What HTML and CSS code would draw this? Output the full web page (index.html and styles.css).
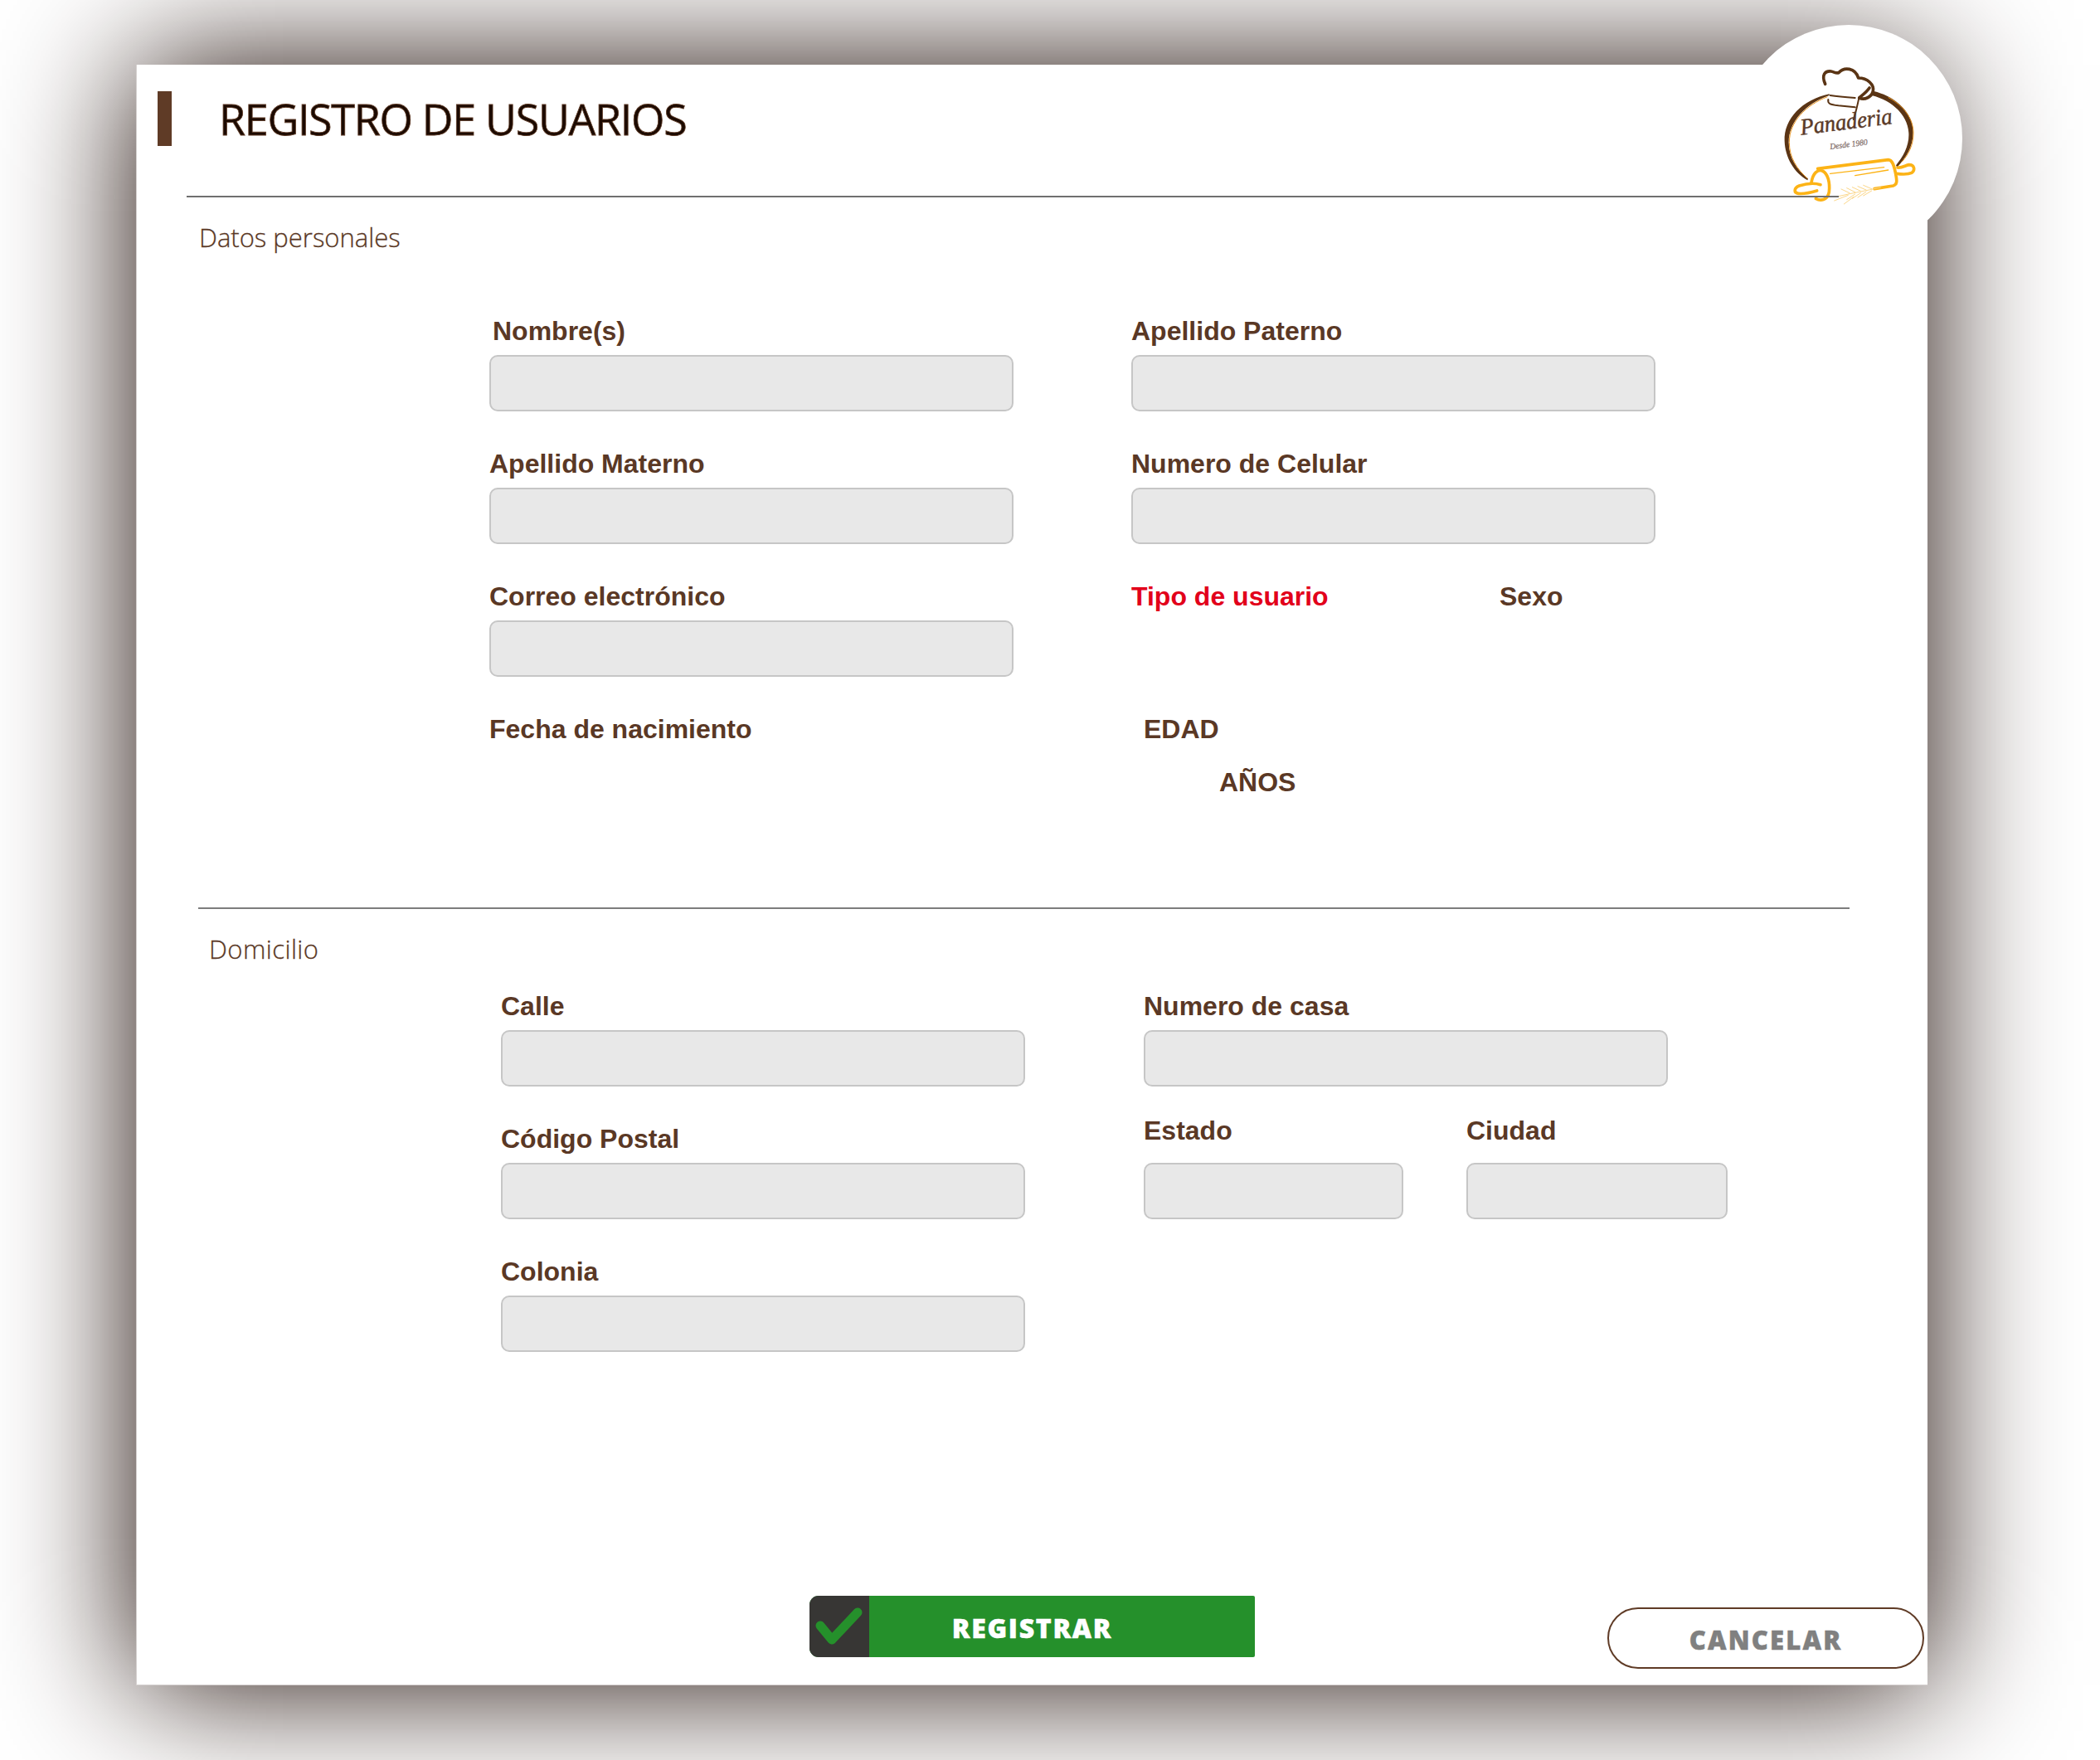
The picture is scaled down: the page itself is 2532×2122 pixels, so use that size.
FILE: index.html
```html
<!DOCTYPE html>
<html lang="es">
<head>
<meta charset="utf-8">
<title>Registro de usuarios</title>
<link rel="stylesheet" href="styles.css">
</head>
<body>
<main class="card">
  <div class="logo-badge">
    <svg class="logo" viewBox="96 90 822 822" aria-label="Panadería">
      <path class="ring" d="M437 340C340 360 272 430 275 510C277 570 310 625 358 652L360 646C320 615 290 570 290 515C290 440 350 375 437 345Z"/>
      <path class="ring-o" d="M430 350C352 380 292 440 292 515C292 570 320 612 358 646"/>
      <path class="ring" d="M598 330C680 350 742 410 740 480C740 530 715 570 682 605L678 598C705 565 727 525 724 480C720 420 670 365 590 345Z"/>
      <path class="ring-o" d="M650 352C705 382 741 428 741 482C741 525 722 560 700 585"/>
      <path class="hat" d="M422 304C408 272 420 256 443 258C455 260 462 268 472 262C490 242 530 244 542 282C575 282 600 306 595 330C590 350 565 364 545 354C555 345 570 335 582 318"/>
      <path class="hat-thin" d="M545 350C540 375 535 400 524 432M440 345C470 350 500 352 530 354M433 360C430 375 440 378 470 382C490 384 510 386 530 388"/>
      <text class="brand" x="335" y="488" textLength="335" lengthAdjust="spacingAndGlyphs" transform="rotate(-7 335 488)">Panaderia</text>
      <text class="since" x="440" y="540" textLength="137" lengthAdjust="spacingAndGlyphs" transform="rotate(-7 440 540)">Desde 1980</text>
      <path class="pin" d="M395 610L650 578C665 578 672 600 678 635C682 655 682 668 668 672L600 683"/>
      <path class="pin" d="M372 660C378 625 395 612 412 618C432 628 440 660 436 695C430 725 405 728 388 718"/>
      <path class="pin" d="M405 668C380 660 350 665 328 672C308 680 308 698 325 700C345 702 375 695 392 690"/>
      <path class="pin" d="M684 606C700 608 712 598 725 596C745 596 748 615 735 625C720 632 695 630 680 628"/>
      <path class="pin-thin" d="M440 628L635 605M530 635L650 615"/>
      <path class="wheat" d="M622 678C570 690 520 698 470 710M480 684L510 698M500 680L530 695M520 677L550 691M540 674L570 687M560 670L590 683M500 722L530 702M520 718L550 698M540 714L570 694M560 708L590 690M455 726L505 706M490 738L525 712"/>
    </svg>
  </div>
  <header class="head">
    <span class="head-bar"></span>
    <h1 class="title">REGISTRO DE USUARIOS</h1>
  </header>
  <div class="rule rule-top"></div>
  <h2 class="section section-personal">Datos personales</h2>
  <form class="form form-personal">
    <div class="field"><label class="label label-nudge">Nombre(s)</label><input class="input" type="text"></div>
    <div class="field"><label class="label">Apellido Paterno</label><input class="input" type="text"></div>
    <div class="field"><label class="label">Apellido Materno</label><input class="input" type="text"></div>
    <div class="field"><label class="label">Numero de Celular</label><input class="input" type="text"></div>
    <div class="field"><label class="label">Correo electrónico</label><input class="input" type="text"></div>
    <div class="pair">
      <label class="label label-red">Tipo de usuario</label>
      <label class="label">Sexo</label>
    </div>
    <div class="field"><label class="label">Fecha de nacimiento</label></div>
    <div class="age">
      <label class="label">EDAD</label>
      <span class="label age-unit">AÑOS</span>
    </div>
  </form>
  <div class="rule rule-mid"></div>
  <h2 class="section section-home">Domicilio</h2>
  <form class="form form-home">
    <div class="field"><label class="label">Calle</label><input class="input" type="text"></div>
    <div class="field"><label class="label">Numero de casa</label><input class="input" type="text"></div>
    <div class="field"><label class="label">Código Postal</label><input class="input" type="text"></div>
    <div class="split">
      <div class="field"><label class="label label-raised">Estado</label><input class="input" type="text"></div>
      <div class="field"><label class="label label-raised">Ciudad</label><input class="input" type="text"></div>
    </div>
    <div class="field"><label class="label">Colonia</label><input class="input" type="text"></div>
  </form>
  <footer class="actions">
    <button class="btn-save" type="button">
      <span class="btn-save-icon">
        <svg class="check" viewBox="0 0 72 74"><path d="M13 36L27 53L58 20"/></svg>
      </span>
      <span class="btn-save-text">REGISTRAR</span>
    </button>
    <button class="btn-cancel" type="button">CANCELAR</button>
  </footer>
</main>
</body>
</html>
```
FILE: styles.css
```css
* { box-sizing: border-box; }
html, body { margin: 0; background: #fff; }
body { padding: 78px 0 0 164px; height: 2122px; overflow: hidden; }

.card {
  position: relative;
  width: 2160px;
  height: 1954px;
  padding-top: 32px;
  background: #fff;
  border: 1px solid #d6d2d1;
  border-width: 0 0 1px 1px;
  box-shadow: 0 0 155px #1d0b05;
}

.logo-badge {
  position: absolute;
  left: 1927px;
  top: -48px;
  width: 274px;
  height: 274px;
  border-radius: 50%;
  background: #fff;
}
.logo { display: block; width: 274px; height: 274px; }
.ring { fill: #5a3414; }
.ring-o { fill: none; stroke: #e8931e; stroke-width: 3; }
.hat { fill: none; stroke: #5a3414; stroke-width: 11; stroke-linecap: round; stroke-linejoin: round; }
.hat-thin { fill: none; stroke: #5a3414; stroke-width: 6; stroke-linecap: round; }
.brand { font: italic 400 84px "Liberation Serif", serif; fill: #5a3a28; stroke: #5a3a28; stroke-width: 1.5; }
.since { font: italic 30px "Liberation Serif", serif; fill: #7d6a66; stroke: #7d6a66; stroke-width: 0.6; }
.pin { fill: #fff; stroke: #fcb316; stroke-width: 11; stroke-linecap: round; stroke-linejoin: round; }
.pin-thin { fill: none; stroke: #fcb316; stroke-width: 4; stroke-linecap: round; }
.wheat { fill: none; stroke: #fbd78a; stroke-width: 3; stroke-linecap: round; }

.head { position: relative; display: flex; align-items: center; gap: 57px; margin-left: 25px; height: 66px; }
.head-bar { width: 17px; height: 66px; background: #5f3b26; }
.title {
  margin: 0;
  font: 400 52px/66px "Open Sans", sans-serif;
  letter-spacing: -1.3px;
  color: #1c0a00;
  -webkit-text-stroke: 0.8px #5f3b26;
}

.rule { position: relative; height: 2px; background: #6f6f6f; }
.rule-top { width: 1992px; margin: 60px 0 0 60px; }
.rule-mid { width: 1991px; margin: 132px 0 0 74px; background: #7d7d7d; }

.section { margin: 26px 0 0; font: 300 31px/44px "Open Sans", sans-serif; color: #5a3825; -webkit-text-stroke: 0.3px #5a3825; }
.section-personal { margin-left: 75px; }
.section-home { margin-left: 87px; letter-spacing: 0.45px; }

.form { display: grid; grid-template-columns: 632px 632px; column-gap: 142px; row-gap: 44px; }
.form-personal { margin: 72px 0 0 425px; }
.form-home { margin: 28px 0 0 439px; column-gap: 143px; }

.field { display: flex; flex-direction: column; }
.label { display: block; font: 700 32px/38px "Liberation Sans", sans-serif; color: #5a3825; margin-bottom: 10px; }
.label-nudge { margin-left: 4px; }
.label-red { color: #e2001a; }
.label-raised { margin-top: -10px; margin-bottom: 20px; }

.input {
  display: block;
  width: 100%;
  height: 68px;
  padding: 0 12px;
  background: #e8e8e8;
  border: 2px solid #c6c6c6;
  border-radius: 10px;
}

.pair { display: grid; grid-template-columns: 444px 1fr; }
.age { padding-left: 15px; }
.age .label { margin-bottom: 0; }
.age .age-unit { margin: 26px 0 0 91px; }

.split { display: grid; grid-template-columns: 313px 315px; column-gap: 76px; }

.actions { display: flex; align-items: flex-start; margin: 294px 0 0 811px; }
.btn-save {
  display: flex;
  width: 537px;
  height: 74px;
  padding: 0;
  border: 0;
  border-radius: 11px 2px 2px 11px;
  overflow: hidden;
  background: #25902b;
}
.btn-save-icon { flex: none; width: 72px; height: 74px; background: #373634; }
.check { display: block; width: 72px; height: 74px; fill: none; stroke: #25902b; stroke-width: 11; stroke-linecap: round; stroke-linejoin: round; }
.btn-save-text {
  flex: 1;
  padding-right: 72px;
  font: 800 32px/78px "Open Sans", sans-serif;
  letter-spacing: 1.7px;
  text-align: center;
  color: #fff;
  -webkit-text-stroke: 0.5px #fff;
}
.btn-cancel {
  width: 382px;
  height: 74px;
  margin: 14px 0 0 425px;
  padding: 4px 0 0;
  background: #fff;
  border: 2px solid #5f3b26;
  border-radius: 37px;
  font: 800 31px/60px "Open Sans", sans-serif;
  letter-spacing: 2.2px;
  color: #808080;
  -webkit-text-stroke: 0.5px #808080;
}
```
